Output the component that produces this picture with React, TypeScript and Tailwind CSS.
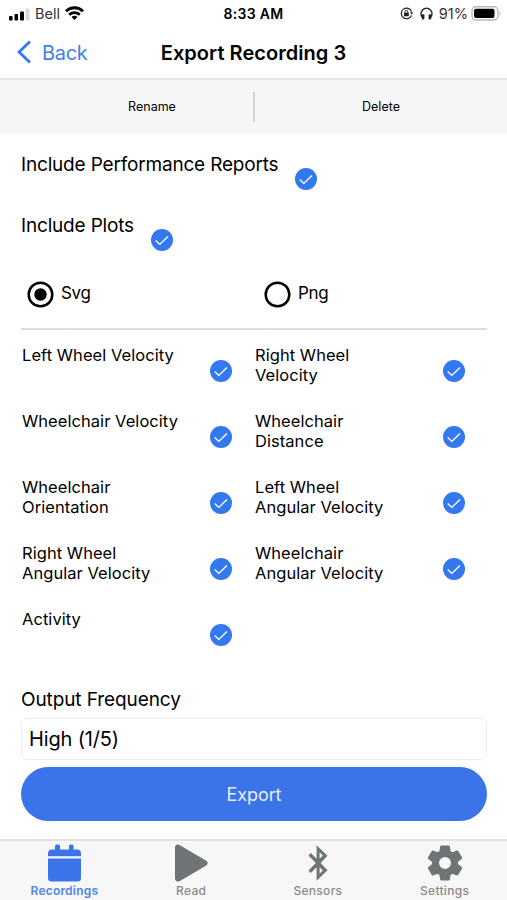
import { useState } from "react";
import clsx from "clsx";

// non-breaking space keeps "Angular Velocity" on one line
const plots = [
  "Left Wheel Velocity",
  "Right Wheel Velocity",
  "Wheelchair Velocity",
  "Wheelchair Distance",
  "Wheelchair Orientation",
  "Left Wheel Angular\u00a0Velocity",
  "Right Wheel Angular\u00a0Velocity",
  "Wheelchair Angular\u00a0Velocity",
  "Activity",
];

function StatusBar() {
  return (
    <div className="grid h-7 grid-cols-3 items-center text-[14px] leading-none">
      <div className="flex items-center pl-[9px]">
        <svg width="21" height="14" viewBox="0 0 21 14">
          <rect x="0" y="9" width="3.6" height="4.500" rx="1" />
          <rect x="5.5" y="7" width="3.6" height="6.500" rx="1" />
          <rect x="11" y="4.5" width="4" height="9" rx="1" />
          <rect x="16.7" y="1.5" width="3.8" height="12" rx="1" fill="#d9d9d9" />
        </svg>
        <span className="ml-[5px] text-[14.500px] text-[#333]">Bell</span>
        <svg className="-mt-0.5 ml-[5px]" width="19" height="14" viewBox="0 0 19 14" fill="none" stroke="#000" strokeWidth="2.8">
          <path d="M1 5.200C5.800.6 13.200.6 18 5.200" />
          <path d="M4.200 8.700c3-2.800 7.600-2.800 10.600 0" />
          <path d="M9.500 13.900 6.500 10.900c1.600-1.500 4.400-1.500 6 0z" fill="#000" stroke="none" />
        </svg>
      </div>
      <div className="text-center font-semibold tracking-[0.3px]">8:33 AM</div>
      <div className="flex items-center justify-end pr-[5px]">
        <svg className="-mt-px" width="13" height="13" viewBox="0 0 13 13" fill="none" stroke="#222" strokeWidth="1.2">
          <path d="M11.500 8.500A5.300 5.300 0 1 1 11.600 4.600" />
          <path d="m10 5.200 3 .1-1.200 2.400z" fill="#222" stroke="none" />
          <rect x="4" y="5.800" width="4.800" height="3.500" rx=".5" fill="#222" stroke="none" />
          <path d="M5 6V4.800a1.400 1.400 0 0 1 2.800 0V6" strokeWidth="1" />
        </svg>
        <svg className="-mt-px ml-[7px]" width="13" height="13" viewBox="0 0 13 13" fill="none" stroke="#222" strokeWidth="1.600">
          <path d="M2.400 10.200A5.400 5.400 0 1 1 10.600 10.200" />
          <rect x="1.800" y="7.300" width="2.600" height="5.200" rx="1" fill="#222" stroke="none" />
          <rect x="8.600" y="7.300" width="2.600" height="5.200" rx="1" fill="#222" stroke="none" />
        </svg>
        <span className="ml-[6px] text-[14.500px] text-[#333]">91%</span>
        <svg className="-mt-px ml-[3px]" width="31" height="15" viewBox="0 0 31 15">
          <rect x="1" y=".8" width="26" height="13.200" rx="4" fill="#fff" stroke="#b9b9b9" strokeWidth="1.400" />
          <rect x="3" y="2.700" width="20.500" height="9.400" rx="2" />
          <path d="M28.600 5.200q2.200 2.200 0 4.500z" fill="#b9b9b9" />
        </svg>
      </div>
    </div>
  );
}

function CheckCircle({ className }: { className?: string }) {
  return (
    <svg className={clsx("shrink-0", className)} width="22" height="22" viewBox="0 0 22 22">
      <circle cx="11" cy="11" r="11" fill="#3478f0" />
      <path d="m4.700 11.500 4.100 3.900 8.200-8" fill="none" stroke="#fff" strokeWidth="1.400" />
    </svg>
  );
}

function Radio({ label, checked, onSelect }: { label: string; checked: boolean; onSelect: () => void }) {
  return (
    <button onClick={onSelect} className="flex items-start gap-[7px] text-left">
      <svg width="27" height="27" viewBox="0 0 27 27">
        <circle cx="13.5" cy="13.5" r="11.8" fill="none" stroke="#000" strokeWidth="2.5" />
        {checked && <circle cx="13.5" cy="13.5" r="6.200" />}
      </svg>
      <span className="pt-px text-[17px] leading-[22px] tracking-[-0.3px]">{label}</span>
    </button>
  );
}

function GearIcon() {
  return (
    <svg width="36" height="36" viewBox="-18 -18 36 36" fill="currentColor">
      <circle r="9.500" fill="none" stroke="currentColor" strokeWidth="7" />
      {[0, 60, 120, 180, 240, 300].map((angle) => (
        <path
          key={angle}
          d="M-3.600-17.500h7.200q1 0 1.200 1l.7 4.200 1.600 2.800-4.600 1h-5l-4.600-1 1.600-2.800.7-4.200q.2-1 1.200-1z"
          transform={`rotate(${angle})`}
        />
      ))}
    </svg>
  );
}

const tabs = [
  {
    label: "Recordings",
    icon: (
      <svg width="33" height="38" viewBox="0 0 33 38" fill="currentColor">
        <path d="M4 5.500h3V2q0-1.500 1.500-1.500h1.800Q12 .5 12 2v3.500h9V2q0-1.500 1.500-1.500h1.800Q25.500 .5 25.500 2v3.500H29q4 0 4 4v2.800H0V9.500q0-4 4-4z" />
        <path d="M0 14.500h33V34q0 3.500-3.500 3.500h-26Q0 37.500 0 34z" />
      </svg>
    ),
  },
  {
    label: "Read",
    icon: (
      <svg width="33" height="38" viewBox="0 0 33 38" fill="currentColor">
        <path d="M0 3.600C0 .8 2.500-.2 4.900 1.200l26 15.200c2.300 1.400 2.300 3.900 0 5.300l-26 15.200C2.500 38.200 0 37.200 0 34.400z" />
      </svg>
    ),
  },
  {
    label: "Sensors",
    icon: (
      <svg width="20" height="38" viewBox="0 0 20 38" fill="currentColor" fillRule="evenodd">
        <path d="M8.600 1.200 19.500 11.800 12.700 19 19.500 26.200 8.600 36.800V23.200L2.800 29 .5 26.600 7.800 19 .5 11.400 2.800 9l5.800 5.800zM11.600 8.200v6.600l3.200-3.200zM11.600 23.200v6.600l3.200-3.400z" />
      </svg>
    ),
  },
  { label: "Settings", icon: <GearIcon /> },
];

export default function App() {
  const [format, setFormat] = useState("Svg");
  const [tab, setTab] = useState("Recordings");

  return (
    <div className="flex h-[900px] w-[507px] flex-col overflow-hidden bg-white font-['Inter',sans-serif] text-black">
      <StatusBar />

      {/* Navigation header */}
      <header className="grid h-[50px] shrink-0 grid-cols-[120px_1fr_120px] items-center">
        <button className="flex items-center gap-[11px] pl-[17px] text-[20px] tracking-[-0.3px] text-[#3f7fec]">
          <svg className="-mt-0.5" width="14" height="24" viewBox="0 0 14 24" fill="none" stroke="#3478f0" strokeWidth="2.800">
            <path d="M13 1.500 2 12l11 10.500" />
          </svg>
          Back
        </button>
        <h1 className="text-center text-[20px] font-semibold tracking-[0.040px] whitespace-nowrap">Export Recording 3</h1>
      </header>

      {/* Actions */}
      <div className="grid h-[55px] shrink-0 grid-cols-[255px_1fr] items-center border-t-2 border-[#e8e8e8] bg-[#f6f6f6] text-[12.500px]">
        <button className="h-[30px] border-r-2 border-[#d5d5d5] pt-px pl-[51px]">Rename</button>
        <button className="pt-px">Delete</button>
      </div>

      <main className="flex flex-1 flex-col pr-[20px] pl-[21px]">
        <div className="mt-5 flex h-[61px] items-start text-[19px] leading-6 tracking-[-0.180px]">
          Include Performance Reports
          <CheckCircle className="mt-[15px] ml-[17px]" />
        </div>
        <div className="flex h-[61px] items-start text-[19px] leading-6 tracking-[-0.180px]">
          Include Plots
          <CheckCircle className="mt-[15px] ml-[17px]" />
        </div>

        <div className="grid h-[55px] grid-cols-[237px_1fr] items-start border-b-2 border-[#dcdcdc] pt-[6px] pl-[6px]">
          {["Svg", "Png"].map((f) => (
            <Radio key={f} label={f} checked={format === f} onSelect={() => setFormat(f)} />
          ))}
        </div>

        <div className="mt-[15px] grid auto-rows-[66px] grid-cols-[233px_1fr] pl-px">
          {plots.map((plot) => (
            <div key={plot} className="flex items-start">
              <span className="w-[160px] text-[16.500px] leading-5 tracking-[0.050px]">{plot}</span>
              <CheckCircle className="mt-[15px] ml-[28px]" />
            </div>
          ))}
        </div>

        <label className="mt-[13px] text-[19px] leading-6 tracking-[-0.100px]">Output Frequency</label>
        <div className="mt-[6px] flex h-[42px] items-center rounded-md border border-[#ececec] pl-[7px] text-[20px] tracking-[-0.150px]">
          High (1/5)
        </div>
        <button className="mt-[7px] h-[54px] rounded-full bg-[#3b73e8] text-[18px] tracking-[-0.100px] text-[#e9f0ff]">
          Export
        </button>
      </main>

      {/* Tab bar */}
      <nav className="grid h-[61px] shrink-0 grid-cols-4 border-t-2 border-[#e2e2e2] bg-[#f7f7f7]">
        {tabs.map((t) => (
          <button
            key={t.label}
            onClick={() => setTab(t.label)}
            className={clsx("flex flex-col items-center pl-[2px]", tab === t.label ? "text-[#3b73e8]" : "text-[#6f7576]")}
          >
            <span className="mt-[3px] flex h-[38px] items-center">{t.icon}</span>
            <span
              className={clsx(
                "mt-px text-[12px] leading-4",
                tab === t.label
                  ? "font-semibold tracking-[0.200px] text-[#5284e9]"
                  : "font-medium tracking-[0.300px] text-[#8b8b8b]"
              )}
            >
              {t.label}
            </span>
          </button>
        ))}
      </nav>
    </div>
  );
}
